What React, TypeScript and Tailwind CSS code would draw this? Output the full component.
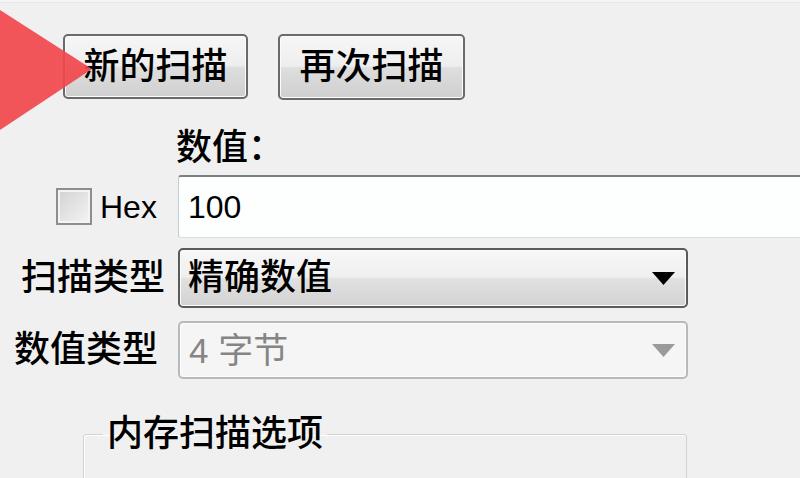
import React from "react";

const FONT = { fontFamily: '"Liberation Sans", "Noto Sans CJK SC", sans-serif' };

function Caret({ color }: { color: string }) {
  return (
    <svg width="23" height="13" viewBox="0 0 23 13" className="shrink-0">
      <polygon points="0,0 23,0 11.5,13" fill={color} />
    </svg>
  );
}

export default function App() {
  return (
    <div
      className="relative w-[800px] h-[478px] overflow-hidden bg-[#f0f0f0] text-black font-medium"
      style={FONT}
    >
      <div className="h-[3px] bg-[#f5f5f5] border-b border-[#e8e8e8]" />

      {/* buttons */}
      <div className="flex gap-[30px] pl-[63px] mt-[31px]">
        <button className="w-[185px] h-[65px] rounded-[5px] border-2 border-[#6a6a6a] bg-[linear-gradient(to_bottom,#f6f6f6_0%,#eeeeee_48%,#dedede_52%,#cfcfcf_100%)] shadow-[inset_0_0_0_1px_#fbfbfb] text-[36px] leading-none flex items-center justify-center">
          新的扫描
        </button>
        <button className="w-[187px] h-[66px] rounded-[5px] border-2 border-[#6a6a6a] bg-[linear-gradient(to_bottom,#f6f6f6_0%,#eeeeee_48%,#dedede_52%,#cfcfcf_100%)] shadow-[inset_0_0_0_1px_#fbfbfb] text-[36px] leading-none flex items-center justify-center">
          再次扫描
        </button>
      </div>

      {/* value label */}
      <div className="mt-[30px] pl-[176px] text-[36px] leading-none h-[35px]">数值：</div>

      {/* hex + input */}
      <div className="mt-[10px] flex items-center h-[63px]">
        <div className="w-[178px] shrink-0 flex items-center pl-[56px] gap-[8px]">
          <div className="w-[36px] h-[37px] border-2 border-[#8e8e8e] bg-[linear-gradient(135deg,#d2d2d2,#f4f4f4)] shadow-[inset_0_0_0_2px_#f4f4f4]" />
          <span className="text-[32px] leading-none font-normal">Hex</span>
        </div>
        <div className="flex-1 min-w-[640px] h-[63px] bg-[#fdfefe] border-t-2 border-t-[#76807f] border-x border-b border-x-[#c3cdcf] border-b-[#d6dfe0] rounded-l-[3px] flex items-center pl-[9px] text-[32px] leading-none font-normal">
          100
        </div>
      </div>

      {/* scan type */}
      <div className="mt-[10px] flex items-center h-[60px]">
        <div className="w-[178px] shrink-0 pl-[21px] text-[36px] leading-none">扫描类型</div>
        <div className="w-[510px] h-[60px] rounded-[5px] border-2 border-[#5a5a5a] bg-[linear-gradient(to_bottom,#f7f7f7_0%,#efefef_48%,#e0e0e0_52%,#d3d3d3_100%)] shadow-[inset_0_0_0_1px_#fbfbfb] flex items-center justify-between pl-[8px] pr-[11px]">
          <span className="text-[36px] leading-none">精确数值</span>
          <Caret color="#000" />
        </div>
      </div>

      {/* value type */}
      <div className="mt-[13px] flex items-center h-[58px]">
        <div className="w-[178px] shrink-0 pl-[14px] text-[36px] leading-none">数值类型</div>
        <div className="w-[510px] h-[58px] rounded-[5px] border-2 border-[#b9b9b9] bg-[#f5f5f5] shadow-[inset_0_0_0_1px_#fdfdfd] flex items-center justify-between pl-[9px] pr-[11px] text-[#858585]">
          <span className="text-[35px] leading-none font-normal">4 字节</span>
          <Caret color="#9a9a9a" />
        </div>
      </div>

      {/* group box */}
      <fieldset className="mt-[37px] ml-[83px] w-[604px] h-[120px] border border-[#d3d3d3] rounded-[3px] shadow-[inset_1px_1px_0_#ffffff]">
        <legend className="ml-[19px] px-[4px] text-[36px] leading-none">内存扫描选项</legend>
      </fieldset>

      {/* red arrow overlay */}
      <svg
        className="absolute left-0 top-0 pointer-events-none"
        width="110"
        height="140"
        viewBox="0 0 110 140"
      >
        <polygon points="0,10 92,69 0,130" fill="#f2484c" fillOpacity="0.92" />
      </svg>
    </div>
  );
}
